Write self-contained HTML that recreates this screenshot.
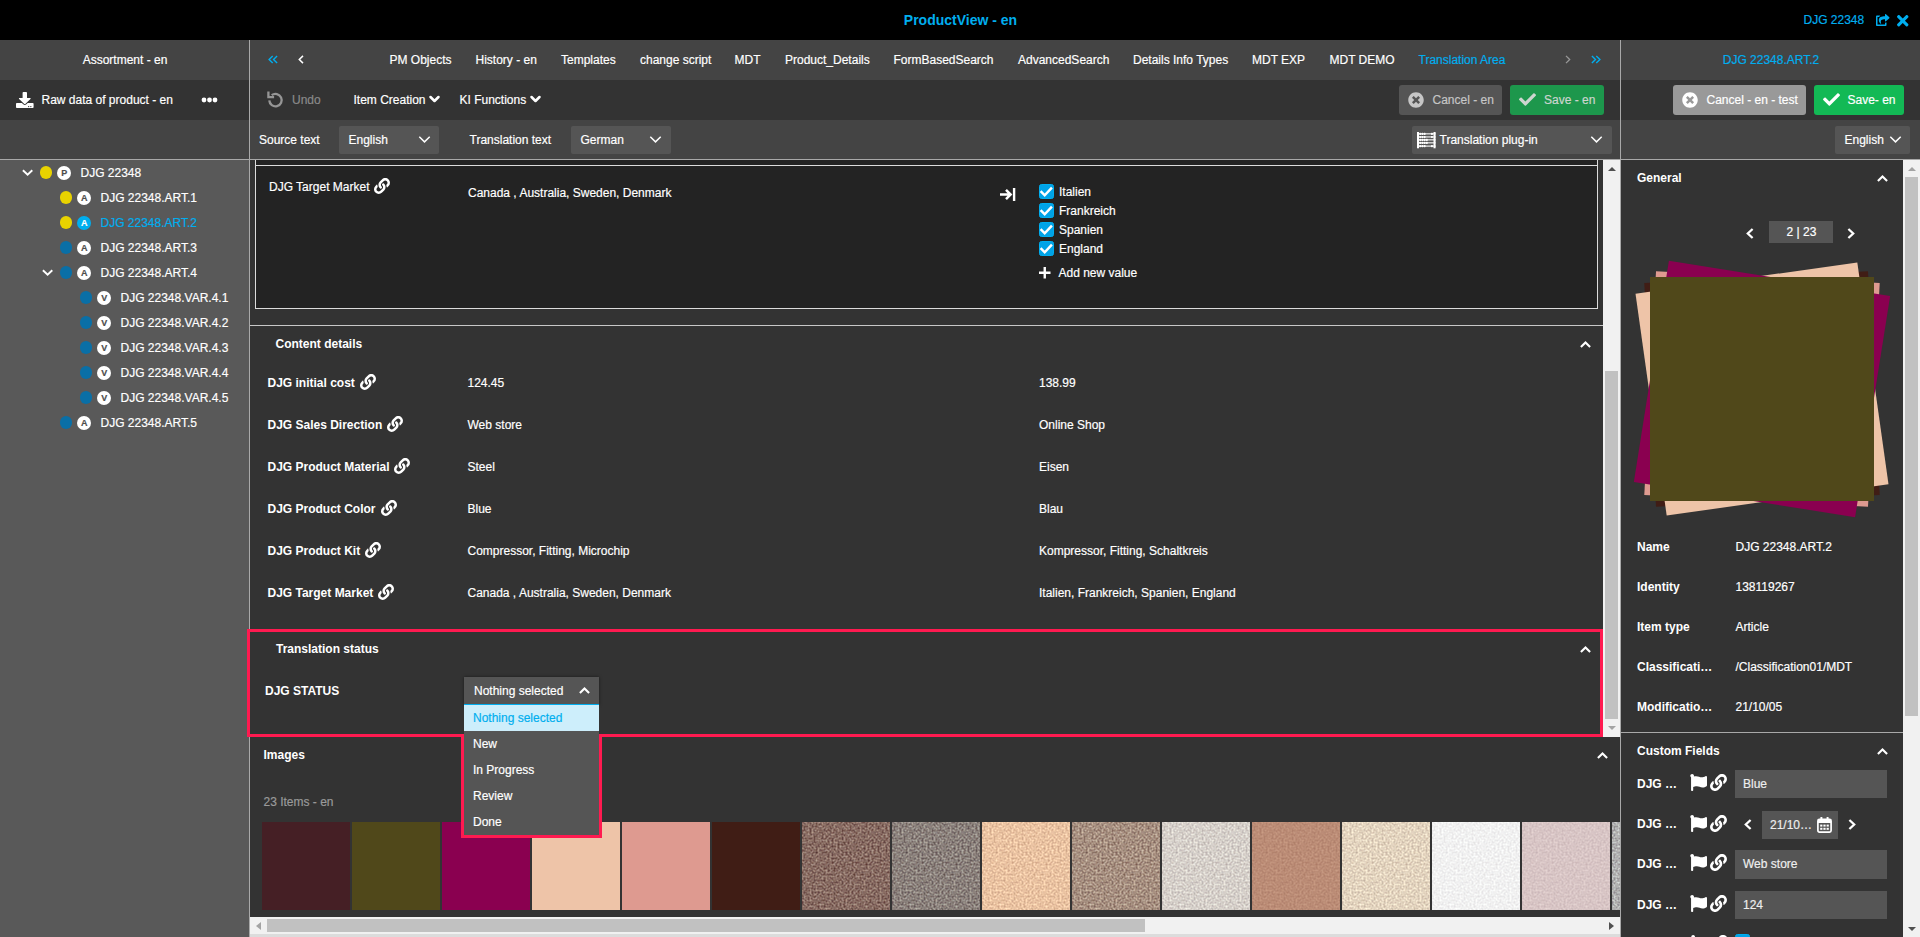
<!DOCTYPE html>
<html>
<head>
<meta charset="utf-8">
<title>ProductView - en</title>
<style>
*{box-sizing:border-box;margin:0;padding:0}
html,body{width:1920px;height:937px;overflow:hidden;background:#333;}
body{position:relative;font-family:"Liberation Sans",sans-serif;font-size:12px;color:#fff;line-height:16px;-webkit-text-stroke:0.18px;}
.a{position:absolute}
.t{position:absolute;white-space:nowrap;height:16px;line-height:16px;margin-left:.5px}
.b{font-weight:700;-webkit-text-stroke:0}
.blue{color:#00aeef}
svg{position:absolute;display:block;overflow:visible}
.bg{position:absolute}
.sel{position:absolute;background:#555;border-radius:2px;height:28px}
.inp{position:absolute;background:#555;height:28px}
.dot{position:absolute;width:12.2px;height:12.2px;border-radius:50%}
.y{background:#e8d200}
.bl{background:#0a6fa6}
.circ{position:absolute;width:14.6px;height:14.6px;border-radius:50%;background:#fff;color:#4d4d4d;font-size:9px;font-weight:700;text-align:center;line-height:14.6px}
.cb{position:absolute;width:15px;height:15px;border-radius:2.5px;background:#00a3e8;border:1px solid #00aeef}
.th{position:absolute;top:822px;width:88px;height:88px}
.st{position:absolute;left:1650px;top:277px;width:224px;height:224px}
</style>
</head>
<body>
<!-- ===== base backgrounds ===== -->
<div class="bg" style="left:0;top:0;width:1920px;height:40px;background:#000"></div>
<div class="bg" style="left:0;top:40px;width:1920px;height:40px;background:#444"></div>
<div class="bg" style="left:0;top:80px;width:1920px;height:40px;background:#333"></div>
<div class="bg" style="left:0;top:120px;width:1920px;height:39px;background:#444"></div>
<div class="bg" style="left:0;top:159px;width:1920px;height:1px;background:#a9a9a9"></div>
<div class="bg" style="left:0;top:160px;width:249px;height:777px;background:#595959"></div>
<div class="bg" style="left:250px;top:160px;width:1370px;height:757px;background:#333"></div>
<div class="bg" style="left:1621px;top:160px;width:282px;height:777px;background:#333"></div>
<!-- vertical dividers -->
<div class="bg" style="left:249px;top:40px;width:1px;height:897px;background:#a9a9a9"></div>
<div class="bg" style="left:1620px;top:40px;width:1px;height:897px;background:#a9a9a9"></div>

<!-- ===== top bar ===== -->
<div class="t b blue" style="left:760px;width:400px;text-align:center;top:11px;font-size:14px;height:18px;line-height:18px">ProductView - en</div>
<div class="t blue" style="left:1803px;top:12px">DJG 22348</div>
<svg style="left:1876px;top:14px" width="13.5" height="12" viewBox="0 0 576 512"><path fill="#00aeef" d="M568.482 177.448L424.479 313.433C409.3 327.768 384 317.14 384 295.985v-71.963c-144.575.97-205.566 35.113-164.775 171.353 4.483 14.973-12.846 26.567-25.006 17.33C155.252 383.105 120 326.488 120 269.339c0-143.937 117.599-172.5 264-173.312V24.012c0-21.174 25.317-31.768 40.479-17.448l144.003 135.988c10.02 9.463 10.028 25.425 0 34.896zM384 379.128V448H64V128h50.916a11.99 11.99 0 0 0 8.648-3.693c14.953-15.568 32.237-27.89 51.014-37.676C185.708 80.83 181.584 64 169.033 64H48C21.49 64 0 85.49 0 112v352c0 26.51 21.49 48 48 48h352c26.51 0 48-21.49 48-48v-88.806c0-8.288-8.197-14.066-16.011-11.302a71.83 71.83 0 0 1-34.189 3.377c-7.27-1.046-13.8 4.514-13.8 11.859z"/></svg>
<svg style="left:1897px;top:14.5px" width="11.5" height="11.5" viewBox="0 80 352 352"><path fill="#00aeef" d="M242.72 256l100.07-100.07c12.28-12.28 12.28-32.19 0-44.48l-22.24-22.24c-12.28-12.28-32.19-12.28-44.48 0L176 189.28 75.93 89.21c-12.28-12.28-32.19-12.28-44.48 0L9.21 111.45c-12.28 12.28-12.28 32.19 0 44.48L109.28 256 9.21 356.07c-12.28 12.28-12.28 32.19 0 44.48l22.24 22.24c12.28 12.28 32.2 12.28 44.48 0L176 322.72l100.07 100.07c12.28 12.28 32.2 12.28 44.48 0l22.24-22.24c12.28-12.28 12.28-32.19 0-44.48L242.72 256z"/></svg>

<!-- ===== left panel ===== -->
<div class="t" style="left:0;width:249px;text-align:center;top:52px">Assortment - en</div>
<svg style="left:16.4px;top:92px" width="17.6" height="16.1" viewBox="0 0 512 512" preserveAspectRatio="none"><path fill="#fff" d="M216 0h80c13.3 0 24 10.7 24 24v168h87.7c17.8 0 26.7 21.5 14.1 34.1L269.7 378.3c-7.5 7.5-19.8 7.5-27.3 0L90.1 226.1c-12.6-12.6-3.7-34.1 14.1-34.1H192V24c0-13.3 10.7-24 24-24zm296 376v112c0 13.3-10.7 24-24 24H24c-13.3 0-24-10.7-24-24V376c0-13.3 10.7-24 24-24h146.7l49 49c20.100 20.100 52.500 20.100 72.600 0l49-49H488c13.300 0 24 10.700 24 24zm-124 88c0-11-9-20-20-20s-20 9-20 20 9 20 20 20 20-9 20-20zm64 0c0-11-9-20-20-20s-20 9-20 20 9 20 20 20 20-9 20-20z"/></svg>
<div class="t" style="left:41px;top:92px">Raw data of product - en</div>
<svg style="left:201px;top:97px" width="17" height="6" viewBox="0 0 17 6"><circle cx="3" cy="3" r="2.4" fill="#fff"/><circle cx="8.5" cy="3" r="2.4" fill="#fff"/><circle cx="14" cy="3" r="2.4" fill="#fff"/></svg>
<!-- tree -->
<svg style="left:22.3px;top:169.2px" width="11.2" height="7.2" viewBox="0 0 11.2 7.2"><path d="M0.9 1.3L5.6 5.800L10.3 1.3" fill="none" stroke="#fff" stroke-width="1.9"/></svg>
<div class="dot y" style="left:40px;top:166.4px"></div><div class="circ" style="left:56.9px;top:165.6px">P</div>
<div class="t" style="left:80px;top:165px">DJG 22348</div>

<div class="dot y" style="left:60px;top:191.4px"></div><div class="circ" style="left:76.9px;top:190.6px">A</div>
<div class="t" style="left:100px;top:190px">DJG 22348.ART.1</div>

<div class="dot y" style="left:60px;top:216.4px"></div><div class="circ" style="left:76.9px;top:215.6px;background:#00aeef;color:#fff">A</div>
<div class="t blue" style="left:100px;top:215px">DJG 22348.ART.2</div>

<div class="dot bl" style="left:60px;top:241.4px"></div><div class="circ" style="left:76.9px;top:240.6px">A</div>
<div class="t" style="left:100px;top:240px">DJG 22348.ART.3</div>

<svg style="left:42.3px;top:269.2px" width="11.2" height="7.2" viewBox="0 0 11.2 7.2"><path d="M0.9 1.3L5.6 5.800L10.3 1.3" fill="none" stroke="#fff" stroke-width="1.9"/></svg>
<div class="dot bl" style="left:60px;top:266.4px"></div><div class="circ" style="left:76.9px;top:265.6px">A</div>
<div class="t" style="left:100px;top:265px">DJG 22348.ART.4</div>

<div class="dot bl" style="left:80px;top:291.4px"></div><div class="circ" style="left:96.9px;top:290.6px">V</div>
<div class="t" style="left:120px;top:290px">DJG 22348.VAR.4.1</div>
<div class="dot bl" style="left:80px;top:316.4px"></div><div class="circ" style="left:96.9px;top:315.6px">V</div>
<div class="t" style="left:120px;top:315px">DJG 22348.VAR.4.2</div>
<div class="dot bl" style="left:80px;top:341.4px"></div><div class="circ" style="left:96.9px;top:340.6px">V</div>
<div class="t" style="left:120px;top:340px">DJG 22348.VAR.4.3</div>
<div class="dot bl" style="left:80px;top:366.4px"></div><div class="circ" style="left:96.9px;top:365.6px">V</div>
<div class="t" style="left:120px;top:365px">DJG 22348.VAR.4.4</div>
<div class="dot bl" style="left:80px;top:391.4px"></div><div class="circ" style="left:96.9px;top:390.6px">V</div>
<div class="t" style="left:120px;top:390px">DJG 22348.VAR.4.5</div>

<div class="dot bl" style="left:60px;top:416.4px"></div><div class="circ" style="left:76.9px;top:415.6px">A</div>
<div class="t" style="left:100px;top:415px">DJG 22348.ART.5</div>

<!-- ===== tab bar ===== -->
<svg style="left:268.3px;top:55.1px" width="10" height="9" viewBox="0 0 10 9"><path d="M4.700 0.9L1.100 4.5L4.700 8.1M9.100 0.9L5.500 4.5L9.100 8.1" fill="none" stroke="#00aeef" stroke-width="1.4"/></svg>
<svg style="left:298.3px;top:55.1px" width="6" height="9" viewBox="0 0 6 9"><path d="M5 0.9L1.300 4.5L5 8.1" fill="none" stroke="#fff" stroke-width="1.5"/></svg>
<div class="t" style="left:389px;top:52px">PM Objects</div>
<div class="t" style="left:475px;top:52px">History - en</div>
<div class="t" style="left:560.5px;top:52px">Templates</div>
<div class="t" style="left:639.5px;top:52px">change script</div>
<div class="t" style="left:734px;top:52px">MDT</div>
<div class="t" style="left:784.5px;top:52px">Product_Details</div>
<div class="t" style="left:893px;top:52px">FormBasedSearch</div>
<div class="t" style="left:1017.5px;top:52px">AdvancedSearch</div>
<div class="t" style="left:1132.5px;top:52px">Details Info Types</div>
<div class="t" style="left:1251.5px;top:52px">MDT EXP</div>
<div class="t" style="left:1329px;top:52px">MDT DEMO</div>
<div class="t blue" style="left:1418px;top:52px">Translation Area</div>
<svg style="left:1564.7px;top:55.1px" width="6" height="9" viewBox="0 0 6 9"><path d="M1 0.9L4.700 4.5L1 8.1" fill="none" stroke="#999" stroke-width="1.3"/></svg>
<svg style="left:1591px;top:55.1px" width="10" height="9" viewBox="0 0 10 9"><path d="M0.900 0.9L4.500 4.5L0.900 8.1M5.300 0.9L8.900 4.5L5.300 8.1" fill="none" stroke="#00aeef" stroke-width="1.4"/></svg>
<div class="t blue" style="left:1621px;width:299px;text-align:center;top:52px">DJG 22348.ART.2</div>

<!-- ===== toolbar row 2 ===== -->
<svg style="left:266.5px;top:91.2px" width="17" height="17" viewBox="0 0 17 17"><path d="M2.3 9.4A6.2 6.2 0 1 0 4.700 4.200" fill="none" stroke="#969696" stroke-width="2.3"/><path d="M1.4 0.500V6.2H7.100" fill="none" stroke="#969696" stroke-width="2.3"/></svg>
<div class="t" style="left:291.5px;top:92px;color:#8a8a8a">Undo</div>
<div class="t" style="left:353px;top:92px">Item Creation</div>
<svg style="left:429px;top:94.6px" width="11" height="8" viewBox="0 0 11 8"><path d="M1.5 2L5.5 6L9.5 2" fill="none" stroke="#fff" stroke-width="2.5" stroke-linecap="round" stroke-linejoin="round"/></svg>
<div class="t" style="left:459px;top:92px">KI Functions</div>
<svg style="left:529.5px;top:94.6px" width="11" height="8" viewBox="0 0 11 8"><path d="M1.5 2L5.5 6L9.5 2" fill="none" stroke="#fff" stroke-width="2.5" stroke-linecap="round" stroke-linejoin="round"/></svg>

<!-- cancel / save center -->
<div class="a" style="left:1399px;top:85px;width:103px;height:30px;background:#555;border-radius:3px"></div>
<svg style="left:1408px;top:92px" width="16" height="16" viewBox="0 0 512 512"><path fill="#c6c6c6" d="M256 8C119 8 8 119 8 256s111 248 248 248 248-111 248-248S393 8 256 8zm121.6 313.1c4.7 4.7 4.7 12.3 0 17L338 377.6c-4.7 4.7-12.3 4.7-17 0L256 312l-65.1 65.6c-4.7 4.7-12.3 4.7-17 0L134.400 338c-4.700-4.700-4.700-12.300 0-17l65.600-65-65.600-65.100c-4.700-4.700-4.700-12.300 0-17l39.600-39.600c4.700-4.700 12.300-4.700 17 0l65 65.700 65.100-65.600c4.700-4.700 12.300-4.700 17 0l39.600 39.600c4.700 4.700 4.700 12.300 0 17L312 256l65.600 65.100z"/></svg>
<div class="t" style="left:1432px;top:92px;color:#c6c6c6">Cancel - en</div>
<div class="a" style="left:1510px;top:85px;width:94px;height:30px;background:#1d974c;border-radius:3px"></div>
<svg style="left:1519px;top:93px" width="17" height="13" viewBox="0 60 512 392"><path fill="#cdd5cf" d="M173.898 439.404l-166.4-166.4c-9.997-9.997-9.997-26.206 0-36.204l36.203-36.204c9.997-9.998 26.207-9.998 36.204 0L192 312.690 432.095 72.596c9.997-9.997 26.207-9.997 36.204 0l36.203 36.204c9.997 9.997 9.997 26.206 0 36.204l-294.400 294.401c-9.998 9.997-26.207 9.997-36.204-.001z"/></svg>
<div class="t" style="left:1543.5px;top:92px;color:#cdd5cf">Save - en</div>
<!-- cancel / save right -->
<div class="a" style="left:1673px;top:85px;width:133px;height:30px;background:#999;border-radius:3px"></div>
<svg style="left:1682px;top:92px" width="16" height="16" viewBox="0 0 512 512"><path fill="#fff" d="M256 8C119 8 8 119 8 256s111 248 248 248 248-111 248-248S393 8 256 8zm121.6 313.1c4.7 4.7 4.7 12.3 0 17L338 377.6c-4.7 4.7-12.3 4.7-17 0L256 312l-65.1 65.6c-4.7 4.7-12.3 4.7-17 0L134.400 338c-4.700-4.700-4.700-12.300 0-17l65.600-65-65.600-65.100c-4.700-4.700-4.700-12.300 0-17l39.600-39.600c4.700-4.700 12.300-4.700 17 0l65 65.700 65.100-65.600c4.700-4.700 12.300-4.700 17 0l39.600 39.600c4.700 4.700 4.700 12.300 0 17L312 256l65.600 65.100z"/></svg>
<div class="t" style="left:1706px;top:92px">Cancel - en - test</div>
<div class="a" style="left:1814px;top:85px;width:90px;height:30px;background:#13b955;border-radius:3px"></div>
<svg style="left:1823px;top:93px" width="17" height="13" viewBox="0 60 512 392"><path fill="#fff" d="M173.898 439.404l-166.4-166.4c-9.997-9.997-9.997-26.206 0-36.204l36.203-36.204c9.997-9.998 26.207-9.998 36.204 0L192 312.690 432.095 72.596c9.997-9.997 26.207-9.997 36.204 0l36.203 36.204c9.997 9.997 9.997 26.206 0 36.204l-294.400 294.401c-9.998 9.997-26.207 9.997-36.204-.001z"/></svg>
<div class="t" style="left:1847px;top:92px">Save- en</div>

<!-- ===== toolbar row 3 ===== -->
<div class="t" style="left:258.5px;top:132px">Source text</div>
<div class="sel" style="left:339px;top:126px;width:100px"></div>
<div class="t" style="left:348px;top:132px">English</div>
<svg style="left:418.6px;top:136px" width="11" height="7" viewBox="0 0 11 7"><path d="M0.3 0.8L5.5 5.9L10.7 0.8" fill="none" stroke="#fff" stroke-width="1.5"/></svg>
<div class="t" style="left:469px;top:132px">Translation text</div>
<div class="sel" style="left:571px;top:126px;width:100px"></div>
<div class="t" style="left:580px;top:132px">German</div>
<svg style="left:650.1px;top:136px" width="11" height="7" viewBox="0 0 11 7"><path d="M0.3 0.8L5.5 5.9L10.7 0.8" fill="none" stroke="#fff" stroke-width="1.5"/></svg>

<div class="sel" style="left:1412px;top:126px;width:200px"></div>
<svg style="left:1417px;top:132px" width="19" height="16.3" viewBox="0 0 19 16.3"><g fill="#fff"><rect x="0" y="0" width="2" height="16.3"/><rect x="16.5" y="0" width="2.1" height="16.3"/><rect x="0" y="1.30" width="18.6" height="1.1"/><rect x="0" y="4.40" width="18.6" height="1.1"/><rect x="0" y="7.30" width="18.6" height="1.1"/><rect x="0" y="10.30" width="18.6" height="1.1"/><rect x="0" y="13.55" width="18.6" height="1.1"/><rect x="2.3" y="0.80" width="1.9" height="2.1" rx="0.7"/><rect x="4.5" y="0.80" width="1.9" height="2.1" rx="0.7"/><rect x="6.7" y="0.80" width="1.9" height="2.1" rx="0.7"/><rect x="14.0" y="0.80" width="1.9" height="2.1" rx="0.7"/><rect x="2.3" y="3.90" width="1.9" height="2.1" rx="0.7"/><rect x="4.5" y="3.90" width="1.9" height="2.1" rx="0.7"/><rect x="6.7" y="3.90" width="1.9" height="2.1" rx="0.7"/><rect x="14.0" y="3.90" width="1.9" height="2.1" rx="0.7"/><rect x="2.3" y="6.80" width="1.9" height="2.1" rx="0.7"/><rect x="4.5" y="6.80" width="1.9" height="2.1" rx="0.7"/><rect x="6.7" y="6.80" width="1.9" height="2.1" rx="0.7"/><rect x="8.9" y="6.80" width="1.9" height="2.1" rx="0.7"/><rect x="2.3" y="9.80" width="1.9" height="2.1" rx="0.7"/><rect x="4.5" y="9.80" width="1.9" height="2.1" rx="0.7"/><rect x="6.7" y="9.80" width="1.9" height="2.1" rx="0.7"/><rect x="8.9" y="9.80" width="1.9" height="2.1" rx="0.7"/><rect x="2.3" y="13.05" width="1.9" height="2.1" rx="0.7"/><rect x="4.5" y="13.05" width="1.9" height="2.1" rx="0.7"/><rect x="6.7" y="13.05" width="1.9" height="2.1" rx="0.7"/><rect x="14.0" y="13.05" width="1.9" height="2.1" rx="0.7"/></g></svg>
<div class="t" style="left:1439px;top:132px">Translation plug-in</div>
<svg style="left:1591px;top:136px" width="11" height="7" viewBox="0 0 11 7"><path d="M0.3 0.8L5.5 5.9L10.7 0.8" fill="none" stroke="#fff" stroke-width="1.5"/></svg>

<div class="sel" style="left:1835px;top:126px;width:75px"></div>
<div class="t" style="left:1844px;top:132px">English</div>
<svg style="left:1890px;top:136px" width="11" height="7" viewBox="0 0 11 7"><path d="M0.3 0.8L5.5 5.9L10.7 0.8" fill="none" stroke="#fff" stroke-width="1.5"/></svg>

<!-- ===== center scroll area ===== -->
<div class="a" style="left:255px;top:160px;width:1343px;height:149px;background:#232323;border-left:1px solid #dcdcdc;border-right:1px solid #dcdcdc;border-bottom:1px solid #dcdcdc"></div>
<div class="a" style="left:255px;top:165px;width:1343px;height:1px;background:#dcdcdc"></div>
<div class="t" style="left:268.5px;top:179px">DJG Target Market</div>
<svg style="left:373.5px;top:178px" width="16" height="16" viewBox="0 0 512 512"><path fill="#fff" d="M326.612 185.391c59.747 59.809 58.927 155.698.36 214.59-.11.12-.24.25-.36.37l-67.2 67.2c-59.27 59.27-155.699 59.262-214.96 0-59.27-59.26-59.27-155.7 0-214.96l37.106-37.106c9.84-9.84 26.786-3.3 27.294 10.606.648 17.722 3.826 35.527 9.69 52.721 1.986 5.822.567 12.262-3.783 16.612l-13.087 13.087c-28.026 28.026-28.905 73.66-1.155 101.96 28.024 28.579 74.086 28.749 102.325.51l67.2-67.19c28.191-28.191 28.073-73.757 0-101.83-3.701-3.694-7.429-6.564-10.341-8.569a16.037 16.037 0 0 1-6.947-12.606c-.396-10.567 3.348-21.456 11.698-29.806l21.054-21.055c5.521-5.521 14.182-6.199 20.584-1.731a152.482 152.482 0 0 1 20.522 17.197zM467.547 44.449c-59.261-59.262-155.69-59.27-214.96 0l-67.2 67.2c-.12.12-.25.25-.36.37-58.566 58.892-59.387 154.781.36 214.59a152.454 152.454 0 0 0 20.521 17.196c6.402 4.468 15.064 3.789 20.584-1.731l21.054-21.055c8.35-8.35 12.094-19.239 11.698-29.806a16.037 16.037 0 0 0-6.947-12.606c-2.912-2.005-6.64-4.875-10.341-8.569-28.073-28.073-28.191-73.639 0-101.83l67.2-67.19c28.239-28.239 74.3-28.069 102.325.51 27.75 28.3 26.872 73.934-1.155 101.96l-13.087 13.087c-4.35 4.35-5.769 10.79-3.783 16.612 5.864 17.194 9.042 34.999 9.69 52.721.509 13.906 17.454 20.446 27.294 10.606l37.106-37.106c59.271-59.259 59.271-155.699.001-214.959z"/></svg>
<div class="t" style="left:467.5px;top:185px">Canada , Australia, Sweden, Denmark</div>
<svg style="left:1000px;top:187.5px" width="15.3" height="13" viewBox="0 0 15.3 13"><path d="M0 6.5H10.4M6 1.9L10.6 6.5L6 11.100" fill="none" stroke="#fff" stroke-width="2.5"/><rect x="12.9" y="0" width="2.4" height="13" fill="#fff"/></svg>
<div class="cb" style="left:1039px;top:184px"><svg style="left:-1px;top:-1px" width="15" height="15" viewBox="0 0 15 15"><path d="M1.600 7.2L5.700 11.300L12.900 3.700" fill="none" stroke="#fff" stroke-width="2.5"/></svg></div>
<div class="t" style="left:1058.5px;top:183.5px">Italien</div>
<div class="cb" style="left:1039px;top:203px"><svg style="left:-1px;top:-1px" width="15" height="15" viewBox="0 0 15 15"><path d="M1.600 7.2L5.700 11.300L12.900 3.700" fill="none" stroke="#fff" stroke-width="2.5"/></svg></div>
<div class="t" style="left:1058.5px;top:202.5px">Frankreich</div>
<div class="cb" style="left:1039px;top:222px"><svg style="left:-1px;top:-1px" width="15" height="15" viewBox="0 0 15 15"><path d="M1.600 7.2L5.700 11.300L12.900 3.700" fill="none" stroke="#fff" stroke-width="2.5"/></svg></div>
<div class="t" style="left:1058.5px;top:221.5px">Spanien</div>
<div class="cb" style="left:1039px;top:241px"><svg style="left:-1px;top:-1px" width="15" height="15" viewBox="0 0 15 15"><path d="M1.600 7.2L5.700 11.300L12.900 3.700" fill="none" stroke="#fff" stroke-width="2.5"/></svg></div>
<div class="t" style="left:1058.5px;top:240.5px">England</div>
<svg style="left:1039px;top:267px" width="11.5" height="11.5" viewBox="0 0 11.5 11.5"><path d="M5.75 0V11.5M0 5.75H11.5" stroke="#fff" stroke-width="2.4" fill="none"/></svg>
<div class="t" style="left:1058px;top:264.5px">Add new value</div>
<div class="a" style="left:250px;top:325px;width:1353px;height:1px;background:#c8c8c8"></div>
<div class="t b" style="left:275px;top:335.5px">Content details</div>
<svg style="left:1579.5px;top:340.5px" width="11" height="7" viewBox="0 0 11 7"><path d="M0.9 6.1L5.5 1.5L10.1 6.1" fill="none" stroke="#fff" stroke-width="2.1"/></svg>
<div class="t b" style="left:267px;top:374.5px">DJG initial cost</div>
<svg style="left:360px;top:373.5px" width="16" height="16" viewBox="0 0 512 512"><path fill="#fff" d="M326.612 185.391c59.747 59.809 58.927 155.698.36 214.59-.11.12-.24.25-.36.37l-67.2 67.2c-59.27 59.27-155.699 59.262-214.96 0-59.27-59.26-59.27-155.7 0-214.96l37.106-37.106c9.84-9.84 26.786-3.3 27.294 10.606.648 17.722 3.826 35.527 9.69 52.721 1.986 5.822.567 12.262-3.783 16.612l-13.087 13.087c-28.026 28.026-28.905 73.66-1.155 101.96 28.024 28.579 74.086 28.749 102.325.51l67.2-67.19c28.191-28.191 28.073-73.757 0-101.83-3.701-3.694-7.429-6.564-10.341-8.569a16.037 16.037 0 0 1-6.947-12.606c-.396-10.567 3.348-21.456 11.698-29.806l21.054-21.055c5.521-5.521 14.182-6.199 20.584-1.731a152.482 152.482 0 0 1 20.522 17.197zM467.547 44.449c-59.261-59.262-155.69-59.27-214.96 0l-67.2 67.2c-.12.12-.25.25-.36.37-58.566 58.892-59.387 154.781.36 214.59a152.454 152.454 0 0 0 20.521 17.196c6.402 4.468 15.064 3.789 20.584-1.731l21.054-21.055c8.35-8.35 12.094-19.239 11.698-29.806a16.037 16.037 0 0 0-6.947-12.606c-2.912-2.005-6.64-4.875-10.341-8.569-28.073-28.073-28.191-73.639 0-101.83l67.2-67.19c28.239-28.239 74.3-28.069 102.325.51 27.75 28.3 26.872 73.934-1.155 101.96l-13.087 13.087c-4.35 4.35-5.769 10.79-3.783 16.612 5.864 17.194 9.042 34.999 9.69 52.721.509 13.906 17.454 20.446 27.294 10.606l37.106-37.106c59.271-59.259 59.271-155.699.001-214.959z"/></svg>
<div class="t" style="left:467px;top:374.5px">124.45</div>
<div class="t" style="left:1038.5px;top:374.5px">138.99</div>
<div class="t b" style="left:267px;top:416.5px">DJG Sales Direction</div>
<svg style="left:387px;top:415.5px" width="16" height="16" viewBox="0 0 512 512"><path fill="#fff" d="M326.612 185.391c59.747 59.809 58.927 155.698.36 214.59-.11.12-.24.25-.36.37l-67.2 67.2c-59.27 59.27-155.699 59.262-214.96 0-59.27-59.26-59.27-155.7 0-214.96l37.106-37.106c9.84-9.84 26.786-3.3 27.294 10.606.648 17.722 3.826 35.527 9.69 52.721 1.986 5.822.567 12.262-3.783 16.612l-13.087 13.087c-28.026 28.026-28.905 73.66-1.155 101.96 28.024 28.579 74.086 28.749 102.325.51l67.2-67.19c28.191-28.191 28.073-73.757 0-101.83-3.701-3.694-7.429-6.564-10.341-8.569a16.037 16.037 0 0 1-6.947-12.606c-.396-10.567 3.348-21.456 11.698-29.806l21.054-21.055c5.521-5.521 14.182-6.199 20.584-1.731a152.482 152.482 0 0 1 20.522 17.197zM467.547 44.449c-59.261-59.262-155.69-59.27-214.96 0l-67.2 67.2c-.12.12-.25.25-.36.37-58.566 58.892-59.387 154.781.36 214.59a152.454 152.454 0 0 0 20.521 17.196c6.402 4.468 15.064 3.789 20.584-1.731l21.054-21.055c8.35-8.35 12.094-19.239 11.698-29.806a16.037 16.037 0 0 0-6.947-12.606c-2.912-2.005-6.64-4.875-10.341-8.569-28.073-28.073-28.191-73.639 0-101.83l67.2-67.19c28.239-28.239 74.3-28.069 102.325.51 27.75 28.3 26.872 73.934-1.155 101.96l-13.087 13.087c-4.35 4.35-5.769 10.79-3.783 16.612 5.864 17.194 9.042 34.999 9.69 52.721.509 13.906 17.454 20.446 27.294 10.606l37.106-37.106c59.271-59.259 59.271-155.699.001-214.959z"/></svg>
<div class="t" style="left:467px;top:416.5px">Web store</div>
<div class="t" style="left:1038.5px;top:416.5px">Online Shop</div>
<div class="t b" style="left:267px;top:458.5px">DJG Product Material</div>
<svg style="left:394px;top:457.5px" width="16" height="16" viewBox="0 0 512 512"><path fill="#fff" d="M326.612 185.391c59.747 59.809 58.927 155.698.36 214.59-.11.12-.24.25-.36.37l-67.2 67.2c-59.27 59.27-155.699 59.262-214.96 0-59.27-59.26-59.27-155.7 0-214.96l37.106-37.106c9.84-9.84 26.786-3.3 27.294 10.606.648 17.722 3.826 35.527 9.69 52.721 1.986 5.822.567 12.262-3.783 16.612l-13.087 13.087c-28.026 28.026-28.905 73.66-1.155 101.96 28.024 28.579 74.086 28.749 102.325.51l67.2-67.19c28.191-28.191 28.073-73.757 0-101.83-3.701-3.694-7.429-6.564-10.341-8.569a16.037 16.037 0 0 1-6.947-12.606c-.396-10.567 3.348-21.456 11.698-29.806l21.054-21.055c5.521-5.521 14.182-6.199 20.584-1.731a152.482 152.482 0 0 1 20.522 17.197zM467.547 44.449c-59.261-59.262-155.69-59.27-214.96 0l-67.2 67.2c-.12.12-.25.25-.36.37-58.566 58.892-59.387 154.781.36 214.59a152.454 152.454 0 0 0 20.521 17.196c6.402 4.468 15.064 3.789 20.584-1.731l21.054-21.055c8.35-8.35 12.094-19.239 11.698-29.806a16.037 16.037 0 0 0-6.947-12.606c-2.912-2.005-6.64-4.875-10.341-8.569-28.073-28.073-28.191-73.639 0-101.83l67.2-67.19c28.239-28.239 74.3-28.069 102.325.51 27.75 28.3 26.872 73.934-1.155 101.96l-13.087 13.087c-4.35 4.35-5.769 10.79-3.783 16.612 5.864 17.194 9.042 34.999 9.69 52.721.509 13.906 17.454 20.446 27.294 10.606l37.106-37.106c59.271-59.259 59.271-155.699.001-214.959z"/></svg>
<div class="t" style="left:467px;top:458.5px">Steel</div>
<div class="t" style="left:1038.5px;top:458.5px">Eisen</div>
<div class="t b" style="left:267px;top:500.5px">DJG Product Color</div>
<svg style="left:380.5px;top:499.5px" width="16" height="16" viewBox="0 0 512 512"><path fill="#fff" d="M326.612 185.391c59.747 59.809 58.927 155.698.36 214.59-.11.12-.24.25-.36.37l-67.2 67.2c-59.27 59.27-155.699 59.262-214.96 0-59.27-59.26-59.27-155.7 0-214.96l37.106-37.106c9.84-9.84 26.786-3.3 27.294 10.606.648 17.722 3.826 35.527 9.69 52.721 1.986 5.822.567 12.262-3.783 16.612l-13.087 13.087c-28.026 28.026-28.905 73.66-1.155 101.96 28.024 28.579 74.086 28.749 102.325.51l67.2-67.19c28.191-28.191 28.073-73.757 0-101.83-3.701-3.694-7.429-6.564-10.341-8.569a16.037 16.037 0 0 1-6.947-12.606c-.396-10.567 3.348-21.456 11.698-29.806l21.054-21.055c5.521-5.521 14.182-6.199 20.584-1.731a152.482 152.482 0 0 1 20.522 17.197zM467.547 44.449c-59.261-59.262-155.69-59.27-214.96 0l-67.2 67.2c-.12.12-.25.25-.36.37-58.566 58.892-59.387 154.781.36 214.59a152.454 152.454 0 0 0 20.521 17.196c6.402 4.468 15.064 3.789 20.584-1.731l21.054-21.055c8.35-8.35 12.094-19.239 11.698-29.806a16.037 16.037 0 0 0-6.947-12.606c-2.912-2.005-6.64-4.875-10.341-8.569-28.073-28.073-28.191-73.639 0-101.83l67.2-67.19c28.239-28.239 74.3-28.069 102.325.51 27.75 28.3 26.872 73.934-1.155 101.96l-13.087 13.087c-4.35 4.35-5.769 10.79-3.783 16.612 5.864 17.194 9.042 34.999 9.69 52.721.509 13.906 17.454 20.446 27.294 10.606l37.106-37.106c59.271-59.259 59.271-155.699.001-214.959z"/></svg>
<div class="t" style="left:467px;top:500.5px">Blue</div>
<div class="t" style="left:1038.5px;top:500.5px">Blau</div>
<div class="t b" style="left:267px;top:542.5px">DJG Product Kit</div>
<svg style="left:365px;top:541.5px" width="16" height="16" viewBox="0 0 512 512"><path fill="#fff" d="M326.612 185.391c59.747 59.809 58.927 155.698.36 214.59-.11.12-.24.25-.36.37l-67.2 67.2c-59.27 59.27-155.699 59.262-214.96 0-59.27-59.26-59.27-155.7 0-214.96l37.106-37.106c9.84-9.84 26.786-3.3 27.294 10.606.648 17.722 3.826 35.527 9.69 52.721 1.986 5.822.567 12.262-3.783 16.612l-13.087 13.087c-28.026 28.026-28.905 73.66-1.155 101.96 28.024 28.579 74.086 28.749 102.325.51l67.2-67.19c28.191-28.191 28.073-73.757 0-101.83-3.701-3.694-7.429-6.564-10.341-8.569a16.037 16.037 0 0 1-6.947-12.606c-.396-10.567 3.348-21.456 11.698-29.806l21.054-21.055c5.521-5.521 14.182-6.199 20.584-1.731a152.482 152.482 0 0 1 20.522 17.197zM467.547 44.449c-59.261-59.262-155.69-59.27-214.96 0l-67.2 67.2c-.12.12-.25.25-.36.37-58.566 58.892-59.387 154.781.36 214.59a152.454 152.454 0 0 0 20.521 17.196c6.402 4.468 15.064 3.789 20.584-1.731l21.054-21.055c8.35-8.35 12.094-19.239 11.698-29.806a16.037 16.037 0 0 0-6.947-12.606c-2.912-2.005-6.64-4.875-10.341-8.569-28.073-28.073-28.191-73.639 0-101.83l67.2-67.19c28.239-28.239 74.3-28.069 102.325.51 27.75 28.3 26.872 73.934-1.155 101.96l-13.087 13.087c-4.35 4.35-5.769 10.79-3.783 16.612 5.864 17.194 9.042 34.999 9.69 52.721.509 13.906 17.454 20.446 27.294 10.606l37.106-37.106c59.271-59.259 59.271-155.699.001-214.959z"/></svg>
<div class="t" style="left:467px;top:542.5px">Compressor, Fitting, Microchip</div>
<div class="t" style="left:1038.5px;top:542.5px">Kompressor, Fitting, Schaltkreis</div>
<div class="t b" style="left:267px;top:584.5px">DJG Target Market</div>
<svg style="left:378px;top:583.5px" width="16" height="16" viewBox="0 0 512 512"><path fill="#fff" d="M326.612 185.391c59.747 59.809 58.927 155.698.36 214.59-.11.12-.24.25-.36.37l-67.2 67.2c-59.27 59.27-155.699 59.262-214.96 0-59.27-59.26-59.27-155.7 0-214.96l37.106-37.106c9.84-9.84 26.786-3.3 27.294 10.606.648 17.722 3.826 35.527 9.69 52.721 1.986 5.822.567 12.262-3.783 16.612l-13.087 13.087c-28.026 28.026-28.905 73.66-1.155 101.96 28.024 28.579 74.086 28.749 102.325.51l67.2-67.19c28.191-28.191 28.073-73.757 0-101.83-3.701-3.694-7.429-6.564-10.341-8.569a16.037 16.037 0 0 1-6.947-12.606c-.396-10.567 3.348-21.456 11.698-29.806l21.054-21.055c5.521-5.521 14.182-6.199 20.584-1.731a152.482 152.482 0 0 1 20.522 17.197zM467.547 44.449c-59.261-59.262-155.69-59.27-214.96 0l-67.2 67.2c-.12.12-.25.25-.36.37-58.566 58.892-59.387 154.781.36 214.59a152.454 152.454 0 0 0 20.521 17.196c6.402 4.468 15.064 3.789 20.584-1.731l21.054-21.055c8.35-8.35 12.094-19.239 11.698-29.806a16.037 16.037 0 0 0-6.947-12.606c-2.912-2.005-6.64-4.875-10.341-8.569-28.073-28.073-28.191-73.639 0-101.83l67.2-67.19c28.239-28.239 74.3-28.069 102.325.51 27.75 28.3 26.872 73.934-1.155 101.96l-13.087 13.087c-4.35 4.35-5.769 10.79-3.783 16.612 5.864 17.194 9.042 34.999 9.69 52.721.509 13.906 17.454 20.446 27.294 10.606l37.106-37.106c59.271-59.259 59.271-155.699.001-214.959z"/></svg>
<div class="t" style="left:467px;top:584.5px">Canada , Australia, Sweden, Denmark</div>
<div class="t" style="left:1038.5px;top:584.5px">Italien, Frankreich, Spanien, England</div>
<div class="t b" style="left:275.5px;top:640.5px">Translation status</div>
<svg style="left:1579.5px;top:646px" width="11" height="7" viewBox="0 0 11 7"><path d="M0.9 6.1L5.5 1.5L10.1 6.1" fill="none" stroke="#fff" stroke-width="2.1"/></svg>
<div class="t b" style="left:264.5px;top:682.5px">DJG STATUS</div>
<div class="a" style="left:1603px;top:160px;width:17px;height:577px;background:#f1f1f1"></div>
<div class="a" style="left:1605px;top:371px;width:13px;height:348px;background:#c1c1c1"></div>
<svg style="left:1607.5px;top:167px" width="8" height="4" viewBox="0 0 8 4"><path d="M0 4L4 0L8 4Z" fill="#505050"/></svg>
<svg style="left:1607.5px;top:725.5px" width="8" height="4" viewBox="0 0 8 4"><path d="M0 0L4 4L8 0Z" fill="#a3a3a3"/></svg>

<!-- ===== images section ===== -->
<svg width="0" height="0" style="left:0;top:0"><defs>
<filter id="nh" x="0" y="0" width="100%" height="100%" color-interpolation-filters="sRGB"><feTurbulence type="fractalNoise" baseFrequency="0.5" numOctaves="2" seed="7" result="n"/><feColorMatrix in="n" type="matrix" values="0.1 0.9 0 0 0  0 1 0 0 0  0 0.9 0.1 0 0  0 0 0 0 1" result="m"/><feComposite in="SourceGraphic" in2="m" operator="arithmetic" k1="0" k2="1" k3="0.62" k4="-0.31"/></filter>
<filter id="nm" x="0" y="0" width="100%" height="100%" color-interpolation-filters="sRGB"><feTurbulence type="fractalNoise" baseFrequency="0.5" numOctaves="2" seed="7" result="n"/><feColorMatrix in="n" type="matrix" values="0.1 0.9 0 0 0  0 1 0 0 0  0 0.9 0.1 0 0  0 0 0 0 1" result="m"/><feComposite in="SourceGraphic" in2="m" operator="arithmetic" k1="0" k2="1" k3="0.42" k4="-0.21"/></filter>
<filter id="nl" x="0" y="0" width="100%" height="100%" color-interpolation-filters="sRGB"><feTurbulence type="fractalNoise" baseFrequency="0.5" numOctaves="2" seed="7" result="n"/><feColorMatrix in="n" type="matrix" values="0.1 0.9 0 0 0  0 1 0 0 0  0 0.9 0.1 0 0  0 0 0 0 1" result="m"/><feComposite in="SourceGraphic" in2="m" operator="arithmetic" k1="0" k2="1" k3="0.2" k4="-0.1"/></filter>
</defs></svg>
<div class="t b" style="left:263px;top:747px">Images</div>
<svg style="left:1596.5px;top:752px" width="11" height="7" viewBox="0 0 11 7"><path d="M0.9 6.1L5.5 1.5L10.1 6.1" fill="none" stroke="#fff" stroke-width="2.1"/></svg>
<div class="t" style="left:263px;top:793.5px;color:#9a9a9a">23 Items - en</div>
<div class="th" style="left:262px;width:88px;background:#451f25"></div>
<div class="th" style="left:352px;width:88px;background:#50481a"></div>
<div class="th" style="left:442px;width:88px;background:#8a0050"></div>
<div class="th" style="left:532px;width:88px;background:#eec4a8"></div>
<div class="th" style="left:622px;width:88px;background:#de9a90"></div>
<div class="th" style="left:712px;width:88px;background:#401d15"></div>
<svg class="th" style="left:802px" width="88" height="88"><rect width="88" height="88" fill="#876b62" filter="url(#nh)"/></svg>
<svg class="th" style="left:892px" width="88" height="88"><rect width="88" height="88" fill="#8a807b" filter="url(#nh)"/></svg>
<svg class="th" style="left:982px" width="88" height="88"><rect width="88" height="88" fill="#eac3a2" filter="url(#nm)"/></svg>
<svg class="th" style="left:1072px" width="88" height="88"><rect width="88" height="88" fill="#a68f80" filter="url(#nh)"/></svg>
<svg class="th" style="left:1162px" width="88" height="88"><rect width="88" height="88" fill="#d6d0ca" filter="url(#nm)"/></svg>
<svg class="th" style="left:1252px" width="88" height="88"><rect width="88" height="88" fill="#bb8c76" filter="url(#nl)"/></svg>
<svg class="th" style="left:1342px" width="88" height="88"><rect width="88" height="88" fill="#e3d4bf" filter="url(#nm)"/></svg>
<svg class="th" style="left:1432px" width="88" height="88"><rect width="88" height="88" fill="#f1f1f1" filter="url(#nl)"/></svg>
<svg class="th" style="left:1522px" width="88" height="88"><rect width="88" height="88" fill="#d8c5c5" filter="url(#nl)"/></svg>
<svg class="th" style="left:1612px" width="8" height="88"><rect width="8" height="88" fill="#b0b0b0" filter="url(#nh)"/></svg>
<div class="a" style="left:250px;top:917px;width:1370px;height:17px;background:#f1f1f1"></div>
<div class="a" style="left:250px;top:934px;width:1370px;height:3px;background:#dcdcdc"></div>
<div class="a" style="left:267px;top:919px;width:878px;height:13px;background:#c1c1c1"></div>
<svg style="left:255.5px;top:921.5px" width="5" height="8" viewBox="0 0 5 8"><path d="M5 0L0 4L5 8Z" fill="#a3a3a3"/></svg>
<svg style="left:1609px;top:921.5px" width="5" height="8" viewBox="0 0 5 8"><path d="M0 0L5 4L0 8Z" fill="#505050"/></svg>

<!-- ===== right panel ===== -->
<div class="t b" style="left:1636.5px;top:169.5px">General</div>
<svg style="left:1876.5px;top:174.5px" width="11" height="7" viewBox="0 0 11 7"><path d="M0.9 6.1L5.5 1.5L10.1 6.1" fill="none" stroke="#fff" stroke-width="2.1"/></svg>
<svg style="left:1746.2px;top:227.8px" width="8" height="11" viewBox="0 0 8 11"><path d="M6.6 1L1.8 5.5L6.6 10" fill="none" stroke="#fff" stroke-width="2.3"/></svg>
<div class="a" style="left:1769px;top:221px;width:64px;height:22px;background:#555"></div>
<div class="t" style="left:1769px;width:64px;text-align:center;top:224px;color:#fff">2 | 23</div>
<svg style="left:1847.2px;top:227.8px" width="8" height="11" viewBox="0 0 8 11"><path d="M1.4 1L6.2 5.5L1.4 10" fill="none" stroke="#fff" stroke-width="2.3"/></svg>
<div class="st" style="background:#401d15;transform:rotate(-3deg)"></div>
<div class="st" style="background:#de9a90;transform:rotate(3deg)"></div>
<div class="st" style="background:#eec4a8;transform:rotate(-8deg)"></div>
<div class="st" style="background:#8a0050;transform:rotate(9deg)"></div>
<div class="st" style="background:#50481a"></div>
<div class="t b" style="left:1636.5px;top:538.5px">Name</div>
<div class="t" style="left:1735px;top:538.5px">DJG 22348.ART.2</div>
<div class="t b" style="left:1636.5px;top:578.5px">Identity</div>
<div class="t" style="left:1735px;top:578.5px">138119267</div>
<div class="t b" style="left:1636.5px;top:618.5px">Item type</div>
<div class="t" style="left:1735px;top:618.5px">Article</div>
<div class="t b" style="left:1636.5px;top:658.5px">Classificati…</div>
<div class="t" style="left:1735px;top:658.5px">/Classification01/MDT</div>
<div class="t b" style="left:1636.5px;top:698.5px">Modificatio…</div>
<div class="t" style="left:1735px;top:698.5px">21/10/05</div>
<div class="a" style="left:1621px;top:732px;width:282px;height:1px;background:#a9a9a9"></div>
<div class="t b" style="left:1636.5px;top:742.5px">Custom Fields</div>
<svg style="left:1876.5px;top:747.5px" width="11" height="7" viewBox="0 0 11 7"><path d="M0.9 6.1L5.5 1.5L10.1 6.1" fill="none" stroke="#fff" stroke-width="2.1"/></svg>
<div class="t b" style="left:1636.5px;top:775.5px">DJG …</div>
<svg style="left:1690.3px;top:774.3px" width="17" height="17" viewBox="0 0 512 512"><path fill="#fff" d="M349.565 98.783C295.978 98.783 251.721 64 184.348 64c-24.955 0-47.309 4.384-68.045 12.013a55.947 55.947 0 0 0 3.586-23.562C118.117 24.015 94.806 1.206 66.338.048 34.345-1.254 8 24.296 8 56c0 19.026 9.497 35.825 24 45.945V488c0 13.255 10.745 24 24 24h16c13.255 0 24-10.745 24-24v-94.4c28.311-12.064 63.582-22.122 114.435-22.122 53.588 0 97.844 34.783 165.217 34.783 48.169 0 86.667-16.294 122.505-40.858C506.840 359.452 512 349.571 512 339.045v-243.1c0-23.393-24.269-38.870-45.485-29.016-34.338 15.948-76.454 31.854-116.950 31.854z"/></svg>
<svg style="left:1710.3px;top:774.3px" width="17" height="17" viewBox="0 0 512 512"><path fill="#fff" d="M326.612 185.391c59.747 59.809 58.927 155.698.36 214.59-.11.12-.24.25-.36.37l-67.2 67.2c-59.27 59.27-155.699 59.262-214.96 0-59.27-59.26-59.27-155.7 0-214.96l37.106-37.106c9.84-9.84 26.786-3.3 27.294 10.606.648 17.722 3.826 35.527 9.69 52.721 1.986 5.822.567 12.262-3.783 16.612l-13.087 13.087c-28.026 28.026-28.905 73.66-1.155 101.96 28.024 28.579 74.086 28.749 102.325.51l67.2-67.19c28.191-28.191 28.073-73.757 0-101.83-3.701-3.694-7.429-6.564-10.341-8.569a16.037 16.037 0 0 1-6.947-12.606c-.396-10.567 3.348-21.456 11.698-29.806l21.054-21.055c5.521-5.521 14.182-6.199 20.584-1.731a152.482 152.482 0 0 1 20.522 17.197zM467.547 44.449c-59.261-59.262-155.69-59.27-214.96 0l-67.2 67.2c-.12.12-.25.25-.36.37-58.566 58.892-59.387 154.781.36 214.59a152.454 152.454 0 0 0 20.521 17.196c6.402 4.468 15.064 3.789 20.584-1.731l21.054-21.055c8.35-8.35 12.094-19.239 11.698-29.806a16.037 16.037 0 0 0-6.947-12.606c-2.912-2.005-6.64-4.875-10.341-8.569-28.073-28.073-28.191-73.639 0-101.83l67.2-67.19c28.239-28.239 74.3-28.069 102.325.51 27.75 28.3 26.872 73.934-1.155 101.96l-13.087 13.087c-4.35 4.35-5.769 10.79-3.783 16.612 5.864 17.194 9.042 34.999 9.69 52.721.509 13.906 17.454 20.446 27.294 10.606l37.106-37.106c59.271-59.259 59.271-155.699.001-214.959z"/></svg>
<div class="inp" style="left:1735px;top:770px;width:152px;height:28px"></div>
<div class="t" style="left:1742.5px;top:775.5px;color:#eee">Blue</div>
<div class="t b" style="left:1636.5px;top:815.7px">DJG …</div>
<svg style="left:1690.3px;top:815.3px" width="17" height="17" viewBox="0 0 512 512"><path fill="#fff" d="M349.565 98.783C295.978 98.783 251.721 64 184.348 64c-24.955 0-47.309 4.384-68.045 12.013a55.947 55.947 0 0 0 3.586-23.562C118.117 24.015 94.806 1.206 66.338.048 34.345-1.254 8 24.296 8 56c0 19.026 9.497 35.825 24 45.945V488c0 13.255 10.745 24 24 24h16c13.255 0 24-10.745 24-24v-94.4c28.311-12.064 63.582-22.122 114.435-22.122 53.588 0 97.844 34.783 165.217 34.783 48.169 0 86.667-16.294 122.505-40.858C506.840 359.452 512 349.571 512 339.045v-243.1c0-23.393-24.269-38.870-45.485-29.016-34.338 15.948-76.454 31.854-116.950 31.854z"/></svg>
<svg style="left:1710.3px;top:815.3px" width="17" height="17" viewBox="0 0 512 512"><path fill="#fff" d="M326.612 185.391c59.747 59.809 58.927 155.698.36 214.59-.11.12-.24.25-.36.37l-67.2 67.2c-59.27 59.27-155.699 59.262-214.96 0-59.27-59.26-59.27-155.7 0-214.96l37.106-37.106c9.84-9.84 26.786-3.3 27.294 10.606.648 17.722 3.826 35.527 9.69 52.721 1.986 5.822.567 12.262-3.783 16.612l-13.087 13.087c-28.026 28.026-28.905 73.66-1.155 101.96 28.024 28.579 74.086 28.749 102.325.51l67.2-67.19c28.191-28.191 28.073-73.757 0-101.83-3.701-3.694-7.429-6.564-10.341-8.569a16.037 16.037 0 0 1-6.947-12.606c-.396-10.567 3.348-21.456 11.698-29.806l21.054-21.055c5.521-5.521 14.182-6.199 20.584-1.731a152.482 152.482 0 0 1 20.522 17.197zM467.547 44.449c-59.261-59.262-155.69-59.27-214.96 0l-67.2 67.2c-.12.12-.25.25-.36.37-58.566 58.892-59.387 154.781.36 214.59a152.454 152.454 0 0 0 20.521 17.196c6.402 4.468 15.064 3.789 20.584-1.731l21.054-21.055c8.35-8.35 12.094-19.239 11.698-29.806a16.037 16.037 0 0 0-6.947-12.606c-2.912-2.005-6.64-4.875-10.341-8.569-28.073-28.073-28.191-73.639 0-101.83l67.2-67.19c28.239-28.239 74.3-28.069 102.325.51 27.75 28.3 26.872 73.934-1.155 101.96l-13.087 13.087c-4.35 4.35-5.769 10.79-3.783 16.612 5.864 17.194 9.042 34.999 9.69 52.721.509 13.906 17.454 20.446 27.294 10.606l37.106-37.106c59.271-59.259 59.271-155.699.001-214.959z"/></svg>
<svg style="left:1743.8px;top:819.3px" width="8" height="11" viewBox="0 0 8 11"><path d="M6.6 1L1.8 5.5L6.6 10" fill="none" stroke="#fff" stroke-width="2.3"/></svg>
<div class="inp" style="left:1762px;top:811px;width:76px"></div>
<div class="t" style="left:1769.5px;top:816.5px;color:#eee">21/10…</div>
<svg style="left:1817px;top:816.5px" width="15" height="16" viewBox="0 0 15 16"><rect x="0.9" y="2.4" width="13.2" height="12.7" rx="1.5" fill="none" stroke="#fff" stroke-width="1.7"/><rect x="0.9" y="2.4" width="13.2" height="3.6" fill="#fff"/><rect x="3.4" y="0" width="2" height="3.4" rx="0.6" fill="#fff"/><rect x="9.6" y="0" width="2" height="3.4" rx="0.6" fill="#fff"/><g fill="#fff"><rect x="3.2" y="7.6" width="2.2" height="2"/><rect x="6.4" y="7.6" width="2.2" height="2"/><rect x="9.600" y="7.6" width="2.2" height="2"/><rect x="3.2" y="10.8" width="2.2" height="2"/><rect x="6.4" y="10.8" width="2.2" height="2"/><rect x="9.600" y="10.8" width="2.2" height="2"/></g></svg>
<svg style="left:1847.8px;top:819.3px" width="8" height="11" viewBox="0 0 8 11"><path d="M1.4 1L6.2 5.5L1.4 10" fill="none" stroke="#fff" stroke-width="2.3"/></svg>
<div class="t b" style="left:1636.5px;top:855.5px">DJG …</div>
<svg style="left:1690.3px;top:854.3px" width="17" height="17" viewBox="0 0 512 512"><path fill="#fff" d="M349.565 98.783C295.978 98.783 251.721 64 184.348 64c-24.955 0-47.309 4.384-68.045 12.013a55.947 55.947 0 0 0 3.586-23.562C118.117 24.015 94.806 1.206 66.338.048 34.345-1.254 8 24.296 8 56c0 19.026 9.497 35.825 24 45.945V488c0 13.255 10.745 24 24 24h16c13.255 0 24-10.745 24-24v-94.4c28.311-12.064 63.582-22.122 114.435-22.122 53.588 0 97.844 34.783 165.217 34.783 48.169 0 86.667-16.294 122.505-40.858C506.840 359.452 512 349.571 512 339.045v-243.1c0-23.393-24.269-38.870-45.485-29.016-34.338 15.948-76.454 31.854-116.950 31.854z"/></svg>
<svg style="left:1710.3px;top:854.3px" width="17" height="17" viewBox="0 0 512 512"><path fill="#fff" d="M326.612 185.391c59.747 59.809 58.927 155.698.36 214.59-.11.12-.24.25-.36.37l-67.2 67.2c-59.27 59.27-155.699 59.262-214.96 0-59.27-59.26-59.27-155.7 0-214.96l37.106-37.106c9.84-9.84 26.786-3.3 27.294 10.606.648 17.722 3.826 35.527 9.69 52.721 1.986 5.822.567 12.262-3.783 16.612l-13.087 13.087c-28.026 28.026-28.905 73.66-1.155 101.96 28.024 28.579 74.086 28.749 102.325.51l67.2-67.19c28.191-28.191 28.073-73.757 0-101.83-3.701-3.694-7.429-6.564-10.341-8.569a16.037 16.037 0 0 1-6.947-12.606c-.396-10.567 3.348-21.456 11.698-29.806l21.054-21.055c5.521-5.521 14.182-6.199 20.584-1.731a152.482 152.482 0 0 1 20.522 17.197zM467.547 44.449c-59.261-59.262-155.69-59.27-214.96 0l-67.2 67.2c-.12.12-.25.25-.36.37-58.566 58.892-59.387 154.781.36 214.59a152.454 152.454 0 0 0 20.521 17.196c6.402 4.468 15.064 3.789 20.584-1.731l21.054-21.055c8.35-8.35 12.094-19.239 11.698-29.806a16.037 16.037 0 0 0-6.947-12.606c-2.912-2.005-6.64-4.875-10.341-8.569-28.073-28.073-28.191-73.639 0-101.83l67.2-67.19c28.239-28.239 74.3-28.069 102.325.51 27.75 28.3 26.872 73.934-1.155 101.96l-13.087 13.087c-4.35 4.35-5.769 10.79-3.783 16.612 5.864 17.194 9.042 34.999 9.69 52.721.509 13.906 17.454 20.446 27.294 10.606l37.106-37.106c59.271-59.259 59.271-155.699.001-214.959z"/></svg>
<div class="inp" style="left:1735px;top:850px;width:152px;height:29px"></div>
<div class="t" style="left:1742.5px;top:855.5px;color:#eee">Web store</div>
<div class="t b" style="left:1636.5px;top:896.5px">DJG …</div>
<svg style="left:1690.3px;top:895.3px" width="17" height="17" viewBox="0 0 512 512"><path fill="#fff" d="M349.565 98.783C295.978 98.783 251.721 64 184.348 64c-24.955 0-47.309 4.384-68.045 12.013a55.947 55.947 0 0 0 3.586-23.562C118.117 24.015 94.806 1.206 66.338.048 34.345-1.254 8 24.296 8 56c0 19.026 9.497 35.825 24 45.945V488c0 13.255 10.745 24 24 24h16c13.255 0 24-10.745 24-24v-94.4c28.311-12.064 63.582-22.122 114.435-22.122 53.588 0 97.844 34.783 165.217 34.783 48.169 0 86.667-16.294 122.505-40.858C506.840 359.452 512 349.571 512 339.045v-243.1c0-23.393-24.269-38.870-45.485-29.016-34.338 15.948-76.454 31.854-116.950 31.854z"/></svg>
<svg style="left:1710.3px;top:895.3px" width="17" height="17" viewBox="0 0 512 512"><path fill="#fff" d="M326.612 185.391c59.747 59.809 58.927 155.698.36 214.59-.11.12-.24.25-.36.37l-67.2 67.2c-59.27 59.27-155.699 59.262-214.96 0-59.27-59.26-59.27-155.7 0-214.96l37.106-37.106c9.84-9.84 26.786-3.3 27.294 10.606.648 17.722 3.826 35.527 9.69 52.721 1.986 5.822.567 12.262-3.783 16.612l-13.087 13.087c-28.026 28.026-28.905 73.66-1.155 101.96 28.024 28.579 74.086 28.749 102.325.51l67.2-67.19c28.191-28.191 28.073-73.757 0-101.83-3.701-3.694-7.429-6.564-10.341-8.569a16.037 16.037 0 0 1-6.947-12.606c-.396-10.567 3.348-21.456 11.698-29.806l21.054-21.055c5.521-5.521 14.182-6.199 20.584-1.731a152.482 152.482 0 0 1 20.522 17.197zM467.547 44.449c-59.261-59.262-155.69-59.27-214.96 0l-67.2 67.2c-.12.12-.25.25-.36.37-58.566 58.892-59.387 154.781.36 214.59a152.454 152.454 0 0 0 20.521 17.196c6.402 4.468 15.064 3.789 20.584-1.731l21.054-21.055c8.35-8.35 12.094-19.239 11.698-29.806a16.037 16.037 0 0 0-6.947-12.606c-2.912-2.005-6.64-4.875-10.341-8.569-28.073-28.073-28.191-73.639 0-101.83l67.2-67.19c28.239-28.239 74.3-28.069 102.325.51 27.75 28.3 26.872 73.934-1.155 101.96l-13.087 13.087c-4.35 4.35-5.769 10.79-3.783 16.612 5.864 17.194 9.042 34.999 9.69 52.721.509 13.906 17.454 20.446 27.294 10.606l37.106-37.106c59.271-59.259 59.271-155.699.001-214.959z"/></svg>
<div class="inp" style="left:1735px;top:891px;width:152px;height:28px"></div>
<div class="t" style="left:1742.5px;top:896.5px;color:#eee">124</div>
<svg style="left:1690.5px;top:935px" width="17" height="17" viewBox="0 0 512 512"><path fill="#fff" d="M349.565 98.783C295.978 98.783 251.721 64 184.348 64c-24.955 0-47.309 4.384-68.045 12.013a55.947 55.947 0 0 0 3.586-23.562C118.117 24.015 94.806 1.206 66.338.048 34.345-1.254 8 24.296 8 56c0 19.026 9.497 35.825 24 45.945V488c0 13.255 10.745 24 24 24h16c13.255 0 24-10.745 24-24v-94.4c28.311-12.064 63.582-22.122 114.435-22.122 53.588 0 97.844 34.783 165.217 34.783 48.169 0 86.667-16.294 122.505-40.858C506.840 359.452 512 349.571 512 339.045v-243.1c0-23.393-24.269-38.870-45.485-29.016-34.338 15.948-76.454 31.854-116.950 31.854z"/></svg>
<svg style="left:1710.5px;top:935px" width="17" height="17" viewBox="0 0 512 512"><path fill="#fff" d="M326.612 185.391c59.747 59.809 58.927 155.698.36 214.59-.11.12-.24.25-.36.37l-67.2 67.2c-59.27 59.27-155.699 59.262-214.96 0-59.27-59.26-59.27-155.7 0-214.96l37.106-37.106c9.84-9.84 26.786-3.3 27.294 10.606.648 17.722 3.826 35.527 9.69 52.721 1.986 5.822.567 12.262-3.783 16.612l-13.087 13.087c-28.026 28.026-28.905 73.66-1.155 101.96 28.024 28.579 74.086 28.749 102.325.51l67.2-67.19c28.191-28.191 28.073-73.757 0-101.83-3.701-3.694-7.429-6.564-10.341-8.569a16.037 16.037 0 0 1-6.947-12.606c-.396-10.567 3.348-21.456 11.698-29.806l21.054-21.055c5.521-5.521 14.182-6.199 20.584-1.731a152.482 152.482 0 0 1 20.522 17.197zM467.547 44.449c-59.261-59.262-155.69-59.27-214.96 0l-67.2 67.2c-.12.12-.25.25-.36.37-58.566 58.892-59.387 154.781.36 214.59a152.454 152.454 0 0 0 20.521 17.196c6.402 4.468 15.064 3.789 20.584-1.731l21.054-21.055c8.35-8.35 12.094-19.239 11.698-29.806a16.037 16.037 0 0 0-6.947-12.606c-2.912-2.005-6.64-4.875-10.341-8.569-28.073-28.073-28.191-73.639 0-101.83l67.2-67.19c28.239-28.239 74.3-28.069 102.325.51 27.75 28.3 26.872 73.934-1.155 101.96l-13.087 13.087c-4.35 4.35-5.769 10.79-3.783 16.612 5.864 17.194 9.042 34.999 9.69 52.721.509 13.906 17.454 20.446 27.294 10.606l37.106-37.106c59.271-59.259 59.271-155.699.001-214.959z"/></svg>
<div class="cb" style="left:1735px;top:934px"></div>
<div class="a" style="left:1903px;top:160px;width:17px;height:777px;background:#f1f1f1"></div>
<div class="a" style="left:1905px;top:177px;width:13px;height:539px;background:#c1c1c1"></div>
<svg style="left:1907.5px;top:167px" width="8" height="4" viewBox="0 0 8 4"><path d="M0 4L4 0L8 4Z" fill="#a3a3a3"/></svg>
<svg style="left:1907.5px;top:926.5px" width="8" height="4" viewBox="0 0 8 4"><path d="M0 0L4 4L8 0Z" fill="#505050"/></svg>

<!-- ===== overlay: pink highlight + dropdown ===== -->
<div class="a" style="left:247px;top:629px;width:1356px;height:108px;border:3px solid #ff1a50"></div>
<div class="a" style="left:461px;top:734px;width:141px;height:104px;border:3px solid #ff1a50"></div>
<div class="a" style="left:464px;top:677px;width:135px;height:28px;background:#555;box-shadow:0 0 3px rgba(0,0,0,.5)"></div>
<div class="t" style="left:473.5px;top:682.5px">Nothing selected</div>
<svg style="left:578.5px;top:687px" width="11" height="7" viewBox="0 0 11 7"><path d="M0.9 6.1L5.5 1.5L10.1 6.1" fill="none" stroke="#fff" stroke-width="2.1"/></svg>
<div class="a" style="left:464px;top:704px;width:135px;height:131px;background:#555;border-top:1px solid #00aeef"></div>
<div class="a" style="left:464px;top:705px;width:135px;height:26px;background:#cdeefb"></div>
<div class="t blue" style="left:472.5px;top:709.5px">Nothing selected</div>
<div class="t" style="left:472.5px;top:735.5px">New</div>
<div class="t" style="left:472.5px;top:761.5px">In Progress</div>
<div class="t" style="left:472.5px;top:787.5px">Review</div>
<div class="t" style="left:472.5px;top:813.5px">Done</div>

</body>
</html>
